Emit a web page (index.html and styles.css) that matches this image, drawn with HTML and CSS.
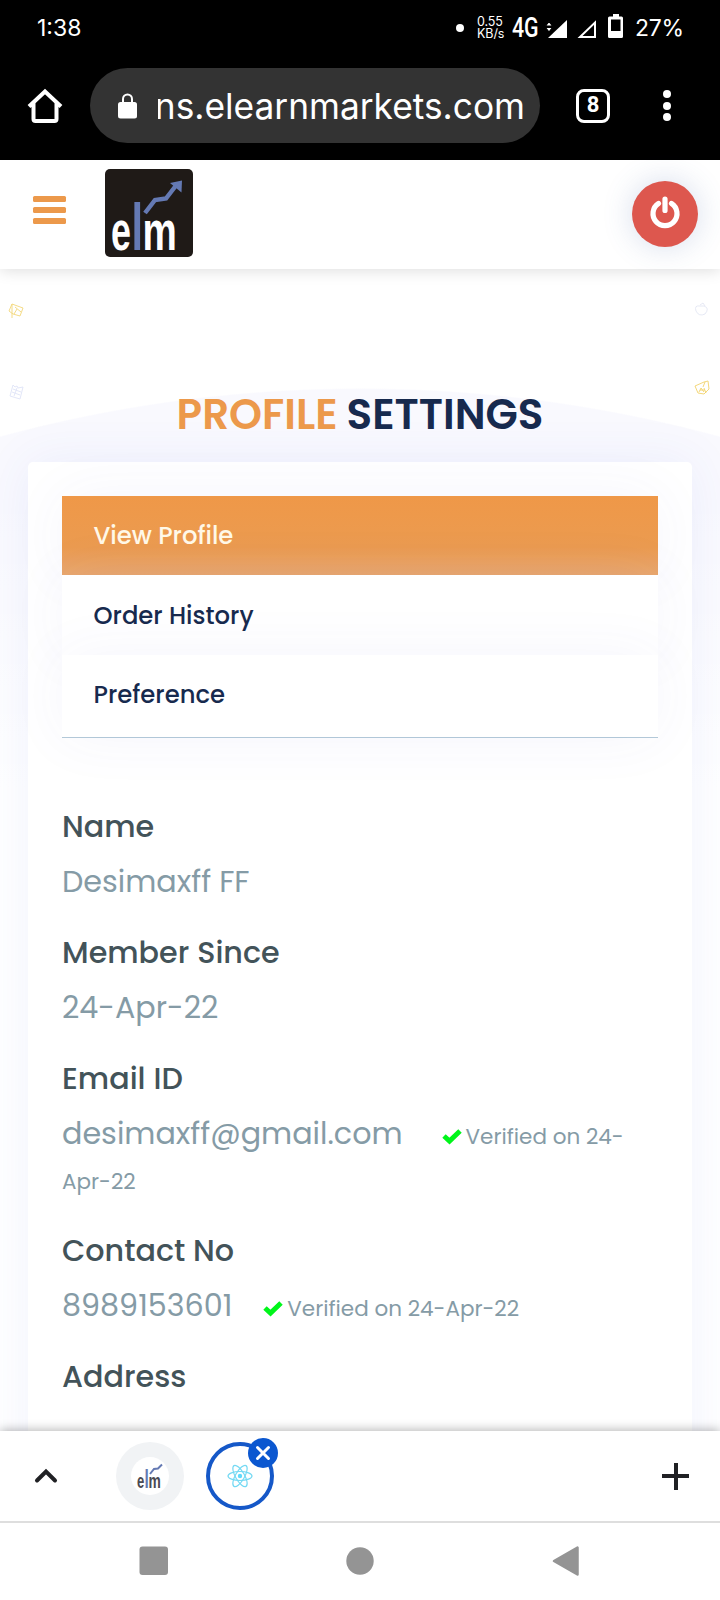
FILE: index.html
```
<!DOCTYPE html>
<html lang="en">
<head>
<meta charset="utf-8">
<title>Profile Settings</title>
<link rel="stylesheet" href="styles.css">
</head>
<body>
<div class="phone">
  <div class="chrome">
    <div class="status">
      <span class="clock">1:38</span>
      <i class="dot"></i>
      <span class="speed"><span>0.55</span><span>KB/s</span></span>
      <span class="net">4G</span>
      <svg class="signals" width="52" height="24" viewBox="0 0 52 24">
        <path d="M21 5v18H2z" fill="#fff"/><path d="M-.5 11l3.500-4.500 3.500 4.500zM-.5 12.500l3.500 4.500 3.500-4.500z" fill="#fff" stroke="#000" stroke-width="1.200"/>
        <path d="M49 7.500v14.500H34z" fill="none" stroke="#fff" stroke-width="2"/>
      </svg>
      <svg class="battery" width="16" height="24" viewBox="0 0 16 24"><path fill="#fff" fill-rule="evenodd" d="M5 0h6v2.500h2.500a1.500 1.500 0 0 1 1.500 1.500v18.500a1.500 1.500 0 0 1-1.500 1.500h-12a1.500 1.500 0 0 1-1.500-1.500v-18.500a1.500 1.500 0 0 1 1.500-1.500h3.500zM3 5.500v11.500h9.500v-11.500z"/></svg>
      <span class="pct">27%</span>
    </div>
    <div class="toolbar">
      <svg class="home" width="36" height="36" viewBox="0 0 36 36" fill="none" stroke="#fff" stroke-width="4"><path d="M2 18.500L18 3.500l16 15M6.500 15v16q0 2 2 2h19q2 0 2-2V15"/></svg>
      <div class="url">
        <svg width="20" height="26" viewBox="0 0 20 26"><rect x="0" y="9" width="19" height="16.500" rx="2.500" fill="#fff"/><path d="M5 10V6a4.500 4.500 0 0 1 9 0v4" fill="none" stroke="#fff" stroke-width="2"/></svg>
        <div class="urltext">ns.elearnmarkets.com</div>
      </div>
      <div class="tabs">8</div>
      <div class="kebab"><i></i><i></i><i></i></div>
    </div>
  </div>

  <header class="header">
    <div class="burger"><i></i><i></i><i></i></div>
    <svg class="logo" width="88" height="88" viewBox="0 0 88 88">
      <rect width="88" height="88" rx="5" fill="#1f1a17"/>
      <g class="logotype"><text transform="translate(6 81) scale(.64 1)" font-size="56" fill="#fff">e</text><text transform="translate(26.500 81) scale(.62 1)" font-size="67" fill="#6479b3">l</text><text transform="translate(37.500 81) scale(.69 1)" font-size="56" fill="#fff">m</text></g>
      <path d="M40 44L50 31l11-1.500 10-13" fill="none" stroke="#6479b3" stroke-width="4.500"/><path d="M65 14l12-2.500-.5 12z" fill="#6479b3"/>
    </svg>
    <div class="power"><svg width="32" height="34" viewBox="0 0 32 34" fill="none" stroke="#fff" stroke-width="5.200" stroke-linecap="round"><path d="M16 4v11.500M9.500 8.500a12 12 0 1 0 13 0"/></svg></div>
  </header>

  <main class="hero">
    <svg class="doodle d1" viewBox="0 0 16 16" stroke="#f3d779"><path d="M4 1l11 4-3 8-7-2-4-3zM4 1v14M7 4l6 5M9 6l-3 5"/></svg>
    <svg class="doodle d2" viewBox="0 0 16 16" stroke="#dfe3f7"><path d="M5 1l2 2 2-1 1 2 5-1-3 12-10-3zM5 5l8 3M4 8l8 3M9 4l-3 8"/></svg>
    <svg class="doodle d3" viewBox="0 0 16 16" stroke="#e3e6f3"><path d="M7 4q-6-1-4 5 3 6 9 3 5-6-1-8l-4 0M7 3l3-2 2 3"/></svg>
    <svg class="doodle d4" viewBox="0 0 16 16" stroke="#f2d36b"><path d="M1 6l9-4 4-1 1 8-5 5-6-1zM9 7l2-5M5 12l2-4 3 4M10 8l2 5M6 10h5"/></svg>
    <h1><span>PROFILE</span> <b>SETTINGS</b></h1>
    <section class="card">
      <nav class="menu">
        <a class="active">View Profile</a>
        <a>Order History</a>
        <a>Preference</a>
      </nav>
      <dl class="fields">
        <dt>Name</dt><dd>Desimaxff FF</dd>
        <dt>Member Since</dt><dd>24-Apr-22</dd>
        <dt>Email ID</dt>
        <dd class="email">desimaxff@gmail.com<small class="far"><svg class="check" width="20" height="16" viewBox="0 0 20 16"><path d="M2 8l5.500 5L18 3"/></svg>Verified on 24-<br>Apr-22</small></dd>
        <dt>Contact No</dt>
        <dd>8989153601<small class="near"><svg class="check" width="20" height="16" viewBox="0 0 20 16"><path d="M2 8l5.500 5L18 3"/></svg>Verified on 24-Apr-22</small></dd>
        <dt>Address</dt>
      </dl>
    </section>
  </main>

  <div class="tabstrip">
    <svg class="up" width="24" height="16" viewBox="0 0 24 16"><path d="M3 12.500L12 3.500l9 9" fill="none" stroke="#202124" stroke-width="4" stroke-linecap="round"/></svg>
    <div class="tab"><div class="fav"><svg width="26" height="28" viewBox="0 0 26 28"><g class="logotype"><text transform="translate(0 26) scale(.62 1)" font-size="21" fill="#4b4a52">e</text><text transform="translate(7.500 26) scale(.62 1)" font-size="25" fill="#6479b3">l</text><text transform="translate(11.500 26) scale(.66 1)" font-size="21" fill="#4b4a52">m</text></g><path d="M13 12l4-5 4-.500 4-4" fill="none" stroke="#6479b3" stroke-width="2"/></svg></div></div>
    <div class="tab current"><svg width="26" height="26" viewBox="-13 -13 26 26" fill="none" stroke="#74d9f3" stroke-width="1.200"><ellipse rx="12" ry="4.500"/><ellipse rx="12" ry="4.500" transform="rotate(60)"/><ellipse rx="12" ry="4.500" transform="rotate(120)"/><circle r="2.200" fill="#61dafb" stroke="none"/></svg>
      <span class="close"><svg width="16" height="16" viewBox="0 0 16 16"><path d="M2.500 2.500l11 11M13.500 2.500l-11 11" stroke="#fff" stroke-width="3" stroke-linecap="round"/></svg></span></div>
    <i class="plus"></i>
  </div>
  <div class="sysnav">
    <svg width="30" height="30"><rect x=".5" y=".5" width="28.500" height="28.500" rx="3" fill="#949494"/></svg>
    <svg width="30" height="30"><circle cx="15" cy="15" r="13.700" fill="#949494"/></svg>
    <svg width="30" height="32"><path d="M3 16L26.500 2.500v27z" fill="#949494" stroke="#949494" stroke-width="2.500" stroke-linejoin="round"/></svg>
  </div>
</div>
</body>
</html>
```
FILE: styles.css
```
* { box-sizing: border-box; }
body { margin: 0; background: #fff; font-family: Poppins, Inter, sans-serif; }
.phone { width: 720px; height: 1600px; overflow: hidden; display: flex; flex-direction: column; background: #fff; }
svg { display: block; flex: none; overflow: visible; }
i { display: block; }

.chrome { height: 160px; flex: none; background: #000; color: #fff; font-family: Inter, sans-serif; }
.status { height: 55px; padding: 0 37px 0 37px; display: flex; align-items: center; font-size: 23px; }
.clock { flex: 1; }
.pct { width: 48px; letter-spacing: -.3px; }
.dot { width: 8px; height: 8px; border-radius: 50%; background: #fff; margin-right: 13px; }
.speed { width: 28px; display: flex; flex-direction: column; font-size: 12.500px; line-height: 12px; letter-spacing: -.1px; white-space: nowrap; margin-right: 7px; }
.net { font: 500 27px/28px Roboto, sans-serif; width: 34px; transform: scaleX(.79); transform-origin: left; }
.signals { margin: 0 10px 2px 0; }
.battery { margin-right: 11px; margin-bottom: 4px; }
.toolbar { height: 101px; display: flex; align-items: center; padding: 0 49px 0 27px; }
.home { margin-right: 27px; }
.url { width: 450px; height: 75px; border-radius: 38px; background: #333; display: flex; align-items: center; padding: 0 15px 0 28px; }
.urltext { flex: 1; margin-left: 20px; overflow: hidden; display: flex; justify-content: flex-end; font-size: 35.300px; line-height: 44px; padding-top: 3px; white-space: nowrap; }
.tabs { width: 34px; height: 34px; border: 3.500px solid #fff; border-radius: 8px; margin-left: 36px; font: 700 22px/25px Roboto, sans-serif; text-align: center; }
.kebab { margin-left: 53px; display: grid; gap: 3.500px; }
.kebab i { width: 8px; height: 8px; border-radius: 50%; background: #fff; }

.header { height: 109px; flex: none; background: #fff; display: flex; align-items: center; padding: 0 22px 0 33px; position: relative; z-index: 2; box-shadow: 0 2px 14px rgba(0,0,0,.13); }
.burger { display: grid; gap: 5px; margin-top: -10px; }
.burger i { width: 33px; height: 6px; border-radius: 1.500px; background: #ec994b; }
.logo { margin: -3px auto 0 39px; }
.logotype { font-family: "Liberation Sans", Arial, sans-serif; font-weight: 700; }
.power { width: 66px; height: 66px; border-radius: 50%; background: #dd574e; display: grid; place-items: center; box-shadow: 0 0 30px rgba(70,100,170,.22); margin-top: -2px; }
.power svg { margin-top: -4px; }

.hero { flex: 1; min-height: 0; overflow: hidden; position: relative; padding: 119px 28px 0; background: linear-gradient(rgba(255,255,255,0) 220px, #fff 520px), radial-gradient(circle 1374px at 360px 1493px, #f9f9fe 99.900%, transparent 100%) #fff; }
.doodle { position: absolute; width: 16px; height: 16px; fill: none; stroke-width: .9; }
.d1 { left: 8px; top: 34px; }
.d2 { left: 8px; top: 115px; }
.d3 { left: 693px; top: 33px; }
.d4 { left: 694px; top: 111px; }
h1 { margin: 0; height: 74px; display: flex; justify-content: center; gap: 9px; font-size: 42px; line-height: 54px; font-weight: 600; color: #ec994b; }
h1 b { color: #172a4e; font-weight: 600; }
.card { height: 1100px; border-radius: 5px; background: #fff; padding: 34px 34px; box-shadow: 0 0 50px rgba(70,90,230,.08); }
.menu { display: block; border-bottom: 1.500px solid #b5cbd9; height: 242px; margin-bottom: 66px; }
.menu a { display: flex; align-items: center; height: 80px; padding: 0 31.500px; background: #fff; color: #172a4e; font-size: 24.300px; font-weight: 500; box-shadow: 0 0 60px rgba(70,80,200,.055); }
.menu a.active { height: 79px; background: linear-gradient(#ef9848, #eb9b50 65%, #e9a76e); color: #fff8e8; }
.menu a:last-child { height: 82px; padding-bottom: 4px; }
.fields { margin: 0; font-size: 30.200px; line-height: 45px; color: #859ba6; }
dt { color: #435359; font-weight: 500; margin-bottom: 10px; }
dd { margin: 0 0 26px; font-weight: 400; white-space: nowrap; }
.email { margin-bottom: 27px; }
small { font-size: 21.500px; line-height: 1; font-weight: 400; }
.check { display: inline-block; margin-right: 4px; vertical-align: 0; fill: none; stroke: #00f51a; stroke-width: 5; }
.far { margin-left: 39px; }
.near { margin-left: 31px; }

.tabstrip { height: 92px; flex: none; background: #fff; border-bottom: 2px solid #dedede; display: flex; align-items: center; padding: 0 31px 0 34px; position: relative; z-index: 2; box-shadow: 0 -1px 10px rgba(0,0,0,.3); }
.tab { width: 68px; height: 68px; border-radius: 50%; background: #f1f3f5; margin-left: 58px; display: grid; place-items: center; position: relative; }
.fav { width: 38px; height: 38px; border-radius: 50%; background: #fff; display: grid; place-items: center; }
.current { margin-left: 22px; background: #fff; border: 4px solid #1558c8; }
.close { position: absolute; left: 37.500px; top: -8px; width: 30px; height: 30px; border-radius: 50%; background: #0b57d0; display: grid; place-items: center; }
.plus { margin-left: auto; width: 27px; height: 27px; background: linear-gradient(#202124,#202124) center/27px 4px no-repeat, linear-gradient(#202124,#202124) center/4px 27px no-repeat; }
.sysnav { height: 77px; flex: none; background: #fff; display: flex; justify-content: space-between; padding: 0 139px 2px 139px; align-items: center; position: relative; z-index: 3; }
```
